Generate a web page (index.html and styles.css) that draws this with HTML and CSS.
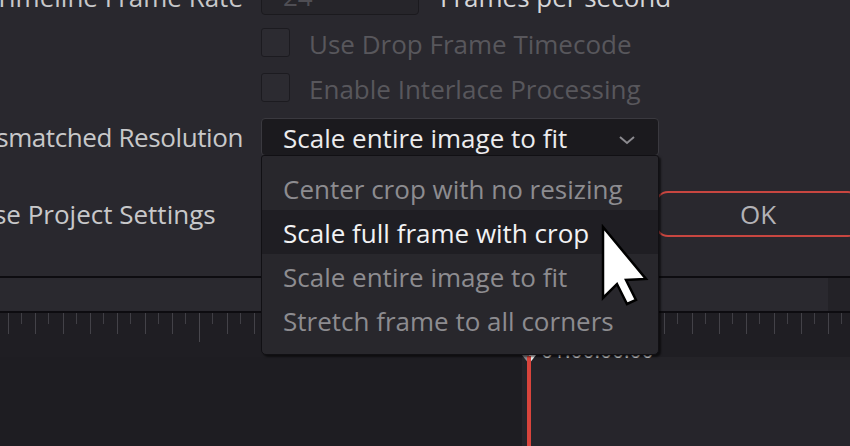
FILE: index.html
```html
<!DOCTYPE html>
<html>
<head>
<meta charset="utf-8">
<link rel="stylesheet" href="styles.css">
</head>
<body>
<div class="screen">
  <section class="dialog">
    <div class="row row-rate">
      <div class="label"><span>Timeline Frame Rate</span></div>
      <div class="field">
        <div class="select select-small">
          <span class="val-dim">24</span>
          <svg class="tri" width="12" height="8" viewBox="0 0 12 8"><path d="M1 1 L11 1 L6 7 Z" fill="#5a595f"/></svg>
        </div>
        <span class="unit">Frames per second</span>
      </div>
    </div>
    <div class="row row-check">
      <div class="label"></div>
      <div class="check"><span class="box"></span><span class="check-text">Use Drop Frame Timecode</span></div>
    </div>
    <div class="row row-check">
      <div class="label"></div>
      <div class="check"><span class="box"></span><span class="check-text">Enable Interlace Processing</span></div>
    </div>
    <div class="row row-res">
      <div class="label label-tight"><span>Mismatched Resolution</span></div>
      <div class="field">
        <div class="select select-wide">
          <span class="val">Scale entire image to fit</span>
          <svg class="chev" width="18" height="10" viewBox="0 0 18 10"><path d="M2 2 L9 8 L16 2" fill="none" stroke="#8b8a8f" stroke-width="2"/></svg>
          <ul class="menu">
            <li class="item">Center crop with no resizing</li>
            <li class="item item-hover">Scale full frame with crop</li>
            <li class="item">Scale entire image to fit</li>
            <li class="item">Stretch frame to all corners</li>
          </ul>
        </div>
      </div>
    </div>
    <div class="actions">
      <span class="proj">Use Project Settings</span>
      <button class="ok">OK</button>
    </div>
  </section>
  <section class="timeline">
    <div class="tl-bar"><div class="tl-scroll"></div><div class="tl-corner"></div></div>
    <div class="ruler"></div>
    <div class="tracks"><div class="tracks-left"></div><div class="tracks-right"></div></div>
    <span class="timecode">01:00:00:00</span>
    <div class="playhead"><svg class="ph-head" width="14" height="9" viewBox="0 0 14 9"><path d="M0 0 L7 0 L7 9 Z" fill="#8c8b90"/><path d="M7 0 L14 0 L7 9 Z" fill="#f2f2f2"/></svg><div class="ph-line"></div></div>
  </section>
  <svg class="cursor" width="50" height="84" viewBox="0 0 50 84"><path d="M3 3 L3 74 L17 60 L27 80 L36 76 L26 56 L46 55 Z" fill="#ffffff" stroke="#000000" stroke-width="2.5" stroke-linejoin="miter"/></svg>
</div>
</body>
</html>
```
FILE: styles.css
```css
* { box-sizing: border-box; }
html, body { margin: 0; padding: 0; }
body {
  width: 850px;
  height: 446px;
  overflow: hidden;
  background: #1e1d22;
  font-family: "Open Sans", "Noto Sans", sans-serif;
  font-size: 26px;
}
.screen {
  position: relative;
  width: 850px;
  height: 446px;
  overflow: hidden;
}
.dialog {
  height: 276px;
  background: #29282e;
  display: flex;
  flex-direction: column;
}
.row {
  display: grid;
  grid-template-columns: 243px 1fr;
  column-gap: 18px;
  align-items: center;
}
.label {
  display: flex;
  justify-content: flex-end;
  color: #c8c8ca;
  white-space: nowrap;
  line-height: 1;
  min-width: 0;
}
.label span { flex-shrink: 0; }
.label-tight { letter-spacing: -0.4px; }
.field {
  display: flex;
  align-items: center;
  gap: 21px;
}
.row-rate { margin-top: -21px; height: 35px; }
.row-check { margin-top: 13px; height: 31px; }
.row-check + .row-check { margin-top: 14px; }
.row-res { margin-top: 15px; height: 38px; }

.select {
  position: relative;
  display: flex;
  align-items: center;
  justify-content: space-between;
  border-radius: 4px;
}
.select-small {
  width: 158px;
  height: 35px;
  background: #26252a;
  border: 1px solid #1b1a1e;
  padding: 0 22px 2px 21px;
}
.val-dim { color: #4f4e54; }
.unit { color: #d6d6d8; white-space: nowrap; }
.tri { margin-top: -10px; }

.check { display: flex; align-items: center; gap: 19px; }
.box {
  width: 29px;
  height: 29px;
  background: #2c2b31;
  border: 1px solid #1c1b20;
  border-radius: 3px;
}
.check-text { color: #58575c; white-space: nowrap; line-height: 1; padding-top: 3px; }

.select-wide {
  width: 398px;
  height: 38px;
  background: #1b1a1e;
  border: 1px solid #3a393f;
  padding: 1px 22px 0 21px;
}
.val { color: #ececee; white-space: nowrap; }
.chev { margin-top: 4px; }

.menu {
  position: absolute;
  z-index: 20;
  left: -1px;
  top: 36px;
  width: 398px;
  height: 200px;
  margin: 0;
  padding: 10px 0 0 0;
  list-style: none;
  background: #28272c;
  border: 1px solid #111014;
  border-radius: 3px 3px 5px 5px;
  box-shadow: 2px 2px 2px rgba(0,0,0,0.55);
}
.item {
  height: 44px;
  display: flex;
  align-items: center;
  padding-left: 21px;
  padding-top: 1px;
  color: #8d8c90;
  white-space: nowrap;
}
.item-hover { background: #1f1e23; color: #f2f2f4; }

.actions {
  margin-top: 35px;
  height: 46px;
  display: flex;
  align-items: center;
  justify-content: space-between;
  margin-left: -25px;
  margin-right: -11px;
}
.proj { color: #c8c8ca; white-space: nowrap; line-height: 1; }
.ok {
  width: 206px;
  height: 46px;
  background: transparent;
  border: 2px solid #c84640;
  border-radius: 13px;
  color: #b3b2b6;
  font-family: inherit;
  font-size: 26px;
  line-height: 1;
  padding: 0;
}

.timeline {
  position: relative;
  height: 170px;
  display: flex;
  flex-direction: column;
}
.tl-bar {
  height: 37px;
  border-top: 2px solid #0d0c10;
  border-bottom: 2px solid #0d0c10;
  display: flex;
}
.tl-scroll { flex: 1; background: #2a292f; }
.tl-corner { width: 22px; background: #232227; }
.ruler {
  height: 44px;
  background-color: #1f1e23;
  background-image:
    linear-gradient(#48474d, #48474d),
    repeating-linear-gradient(90deg, transparent 0 8px, #434248 8px 9px, transparent 9px 27.34px),
    repeating-linear-gradient(90deg, transparent 0 21px, #403f45 21px 22px, transparent 22px 27.34px);
  background-size: 1px 29px, 100% 21px, 100% 11px;
  background-position: 199px 0, 0 0, 0 0;
  background-repeat: no-repeat;
}
.tracks { flex: 1; display: flex; }
.tracks-left { width: 522px; background: #1e1d22; }
.tracks-right { flex: 1; background: #26252b; border-top: 13px solid #242328; }
.timecode {
  position: absolute;
  left: 541px;
  top: 64px;
  font-size: 21px;
  color: #c9c9cb;
  line-height: 1;
}
.playhead {
  position: absolute;
  left: 522px;
  top: 79px;
  bottom: 0;
  width: 14px;
  display: flex;
  flex-direction: column;
  align-items: center;
}
.ph-head { display: block; }
.ph-line { flex: 1; width: 4px; background: #d8443c; margin-top: -8px; }
.cursor {
  position: absolute;
  z-index: 30;
  left: 600px;
  top: 224px;
}
```
